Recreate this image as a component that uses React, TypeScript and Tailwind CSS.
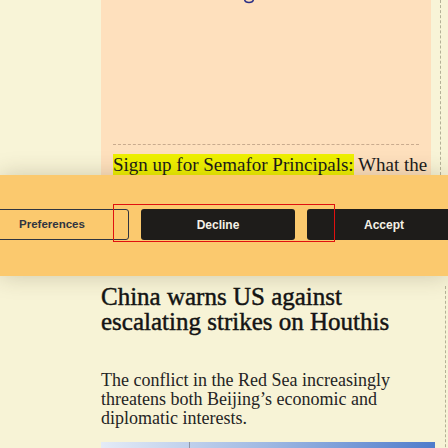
import React from "react";

export default function App() {
  const serif = { fontFamily: '"Liberation Serif", "Times New Roman", serif' };
  return (
    <div className="w-[448px] h-[448px] overflow-hidden bg-[#f7f3d6] flex flex-col">
      {/* top section */}
      <div className="h-[175px] shrink-0 flex overflow-hidden">
        <div className="w-[101px] shrink-0 bg-[#f8f4d7]" />
        <div className="w-[330px] shrink-0 bg-[#fee0bd] flex flex-col px-3">
          <div className="h-[4px] relative">
            <svg width="12" height="5" viewBox="0 0 12 5" className="absolute left-[130px] -top-[1px]">
              <path d="M1.5 0.5 Q2 3.5 6 3.5 Q10 3.5 10.5 0.5" fill="none" stroke="#2b2f86" strokeWidth="1.4" />
            </svg>
          </div>
          <div className="mt-[142px] border-t border-dashed border-[#c9ab8e]" />
          <div className="mt-[10px] text-[19px] leading-[20px] text-[#1a1a1a] whitespace-nowrap" style={serif}>
            <span className="bg-[#eef000]">Sign up for Semafor Principals:</span> What the
          </div>
        </div>
        <div className="flex-1 bg-[#f8f4d7] pl-[9px]">
          <div className="h-full border-l border-dashed border-[#b4b197]" />
        </div>
      </div>

      {/* cookie banner */}
      <div className="relative z-10 h-[101px] shrink-0 bg-[#fbc96e] shadow-[0_0_22px_rgba(60,50,20,0.22)] flex items-center">
        <div className="ml-[-25px] flex gap-3 mt-[-2px]" style={{ fontFamily: '"Liberation Sans", Arial, sans-serif' }}>
          <button className="w-[154px] h-[31px] rounded-[3px] border border-[#2f3440] text-[#2f3440] text-[11.5px] font-bold flex items-center justify-center">
            Preferences
          </button>
          <div className="relative">
            <div className="absolute -left-[28px] -top-[5px] w-[222px] h-[38px] border border-[#e01010] pointer-events-none" />
            <button className="w-[154px] h-[31px] rounded-[3px] bg-[#1e1c1a] text-[#f5f1e6] text-[12px] font-bold flex items-center justify-center">
              Decline
            </button>
          </div>
          <button className="w-[154px] h-[31px] rounded-[3px] bg-[#1e1c1a] text-[#f5f1e6] text-[12px] font-bold flex items-center justify-center">
            Accept
          </button>
        </div>
      </div>

      {/* article */}
      <div className="flex-1 flex">
        <div className="w-[101px] shrink-0" />
        <div className="w-[334px] shrink-0 flex flex-col pt-[8px]">
          <h1
            className="text-[25px] leading-[25px] font-normal text-[#141414] [-webkit-text-stroke:0.45px_#141414] whitespace-nowrap"
            style={serif}
          >
            China warns US against
            <br />
            escalating strikes on Houthis
          </h1>
          <p className="mt-[37px] text-[18px] leading-[19px] text-[#242424] whitespace-nowrap" style={serif}>
            The conflict in the Red Sea increasingly
            <br />
            threatens both Beijing’s economic and
            <br />
            diplomatic interests.
          </p>
          <div className="mt-[14px] h-[20px] bg-gradient-to-r from-[#e4ebf6] via-[#9fb8e2] to-[#4f7ccb] relative overflow-hidden">
            <div className="absolute left-[88px] top-0 w-px h-full bg-[#8c94a4]" />
          </div>
        </div>
        <div className="flex-1 pl-[10px] pt-[10px]">
          <div className="h-full border-l border-dashed border-[#b4b197]" />
        </div>
      </div>
    </div>
  );
}
